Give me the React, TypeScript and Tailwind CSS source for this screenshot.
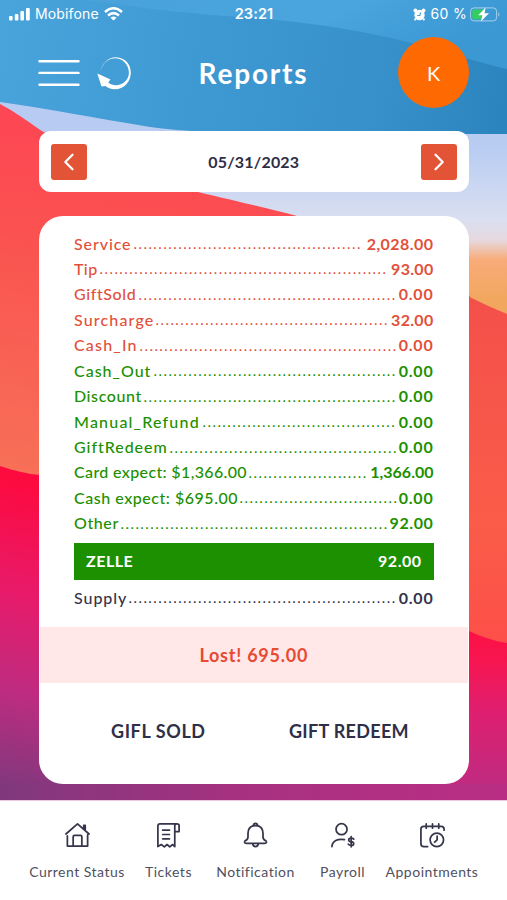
import type { ReactNode } from "react";
import { clsx } from "clsx";

interface ReportRow {
  label: string;
  value: string;
  dots: number;
  tone: string;
  labelClass: string;
  valueClass: string;
}

const RED = "text-[#e2503a]";
const GREEN = "text-[#1c9000]";
const INK = "text-[#33334a]";

const rows: ReportRow[] = [
  { label: "Service", value: "2,028.00", dots: 46, tone: RED, labelClass: "w-[59px] tracking-[0.9px]", valueClass: "tracking-[0.45px]" },
  { label: "Tip", value: "93.00", dots: 58, tone: RED, labelClass: "w-[25px] tracking-[0.4px]", valueClass: "tracking-[0.3px]" },
  { label: "GiftSold", value: "0.00", dots: 52, tone: RED, labelClass: "w-[64px] tracking-[0.6px]", valueClass: "tracking-[0.8px]" },
  { label: "Surcharge", value: "32.00", dots: 47, tone: RED, labelClass: "w-[81px] tracking-[1.15px]", valueClass: "tracking-[0.3px]" },
  { label: "Cash_In", value: "0.00", dots: 52, tone: RED, labelClass: "w-[65px] tracking-[1.2px]", valueClass: "tracking-[0.8px]" },
  { label: "Cash_Out", value: "0.00", dots: 49, tone: GREEN, labelClass: "w-[79px] tracking-[1px]", valueClass: "tracking-[0.8px]" },
  { label: "Discount", value: "0.00", dots: 51, tone: GREEN, labelClass: "w-[69px] tracking-[0.6px]", valueClass: "tracking-[0.8px]" },
  { label: "Manual_Refund", value: "0.00", dots: 39, tone: GREEN, labelClass: "w-[128px] tracking-[1.2px]", valueClass: "tracking-[0.8px]" },
  { label: "GiftRedeem", value: "0.00", dots: 46, tone: GREEN, labelClass: "w-[95px] tracking-[0.95px]", valueClass: "tracking-[0.8px]" },
  { label: "Card expect: $1,366.00", value: "1,366.00", dots: 24, tone: GREEN, labelClass: "w-[174px] tracking-[0.36px]", valueClass: "tracking-[0px]" },
  { label: "Cash expect: $695.00", value: "0.00", dots: 32, tone: GREEN, labelClass: "w-[165px] tracking-[0.53px]", valueClass: "tracking-[0.8px]" },
  { label: "Other", value: "92.00", dots: 54, tone: GREEN, labelClass: "w-[46px] tracking-[0.6px]", valueClass: "tracking-[0.6px]" },
];

const supply: ReportRow = {
  label: "Supply",
  value: "0.00",
  dots: 54,
  tone: INK,
  labelClass: "w-[54px] tracking-[0.95px]",
  valueClass: "tracking-[0.8px]",
};

function Wallpaper() {
  return (
    <svg
      className="absolute inset-0 h-[800px] w-full"
      viewBox="0 0 507 800"
      preserveAspectRatio="none"
      aria-hidden
    >
      <defs>
        <linearGradient id="sky" gradientUnits="userSpaceOnUse" x1="0" y1="100" x2="0" y2="300">
          <stop offset="0" stopColor="#b7cbf3" />
          <stop offset="0.25" stopColor="#b9cdf2" />
          <stop offset="0.6" stopColor="#dadff1" />
          <stop offset="0.7" stopColor="#e6d9df" />
          <stop offset="0.8" stopColor="#f8ab78" />
          <stop offset="1" stopColor="#f2a75f" />
        </linearGradient>
        <linearGradient id="blueTop" x1="0" y1="0" x2="1" y2="0.3">
          <stop offset="0" stopColor="#49a2da" />
          <stop offset="0.6" stopColor="#4aa4de" />
          <stop offset="1" stopColor="#3b98d2" />
        </linearGradient>
        <linearGradient id="blueLow" gradientUnits="userSpaceOnUse" x1="0" y1="30" x2="507" y2="110">
          <stop offset="0" stopColor="#4aa4dc" />
          <stop offset="0.45" stopColor="#3d97d0" />
          <stop offset="0.75" stopColor="#3790c9" />
          <stop offset="1" stopColor="#2c84be" />
        </linearGradient>
        <linearGradient id="coral" gradientUnits="userSpaceOnUse" x1="40" y1="110" x2="0" y2="470">
          <stop offset="0" stopColor="#fe4654" />
          <stop offset="0.35" stopColor="#fa5250" />
          <stop offset="1" stopColor="#f77057" />
        </linearGradient>
        <linearGradient id="coralRight" gradientUnits="userSpaceOnUse" x1="0" y1="300" x2="0" y2="645">
          <stop offset="0" stopColor="#f4504a" />
          <stop offset="0.65" stopColor="#fa5c49" />
          <stop offset="1" stopColor="#fd4f48" />
        </linearGradient>
        <linearGradient id="crimson" gradientUnits="userSpaceOnUse" x1="140" y1="430" x2="60" y2="800">
          <stop offset="0" stopColor="#ff083a" />
          <stop offset="0.2" stopColor="#fd0a3f" />
          <stop offset="0.5" stopColor="#e71b6b" />
          <stop offset="0.75" stopColor="#bd2c80" />
          <stop offset="1" stopColor="#80387d" />
        </linearGradient>
        <linearGradient id="crimsonRight" gradientUnits="userSpaceOnUse" x1="0" y1="625" x2="0" y2="800">
          <stop offset="0" stopColor="#fe1042" />
          <stop offset="0.2" stopColor="#f71550" />
          <stop offset="0.5" stopColor="#df1f70" />
          <stop offset="1" stopColor="#b92e84" />
        </linearGradient>
        <linearGradient id="floor" gradientUnits="userSpaceOnUse" x1="0" y1="0" x2="507" y2="0">
          <stop offset="0" stopColor="#80387d" />
          <stop offset="0.5" stopColor="#a83181" />
          <stop offset="1" stopColor="#b92e84" />
        </linearGradient>
      </defs>
      <rect width="507" height="340" fill="url(#sky)" />
      <path d="M0 0H507V134H420C300 134 220 136 150 127C95 118 45 108 0 102Z" fill="url(#blueLow)" />
      <path d="M85 0C120 5 175 13 254 18C330 24 375 34 412 43C445 51 475 62 507 69V0Z" fill="url(#blueTop)" />
      <path d="M0 104C22 116 31 124 42 131C90 160 140 175 198 192C240 202 270 209 297 216C390 242 430 280 470 296L470 660H0Z" fill="url(#coral)" />
      <path d="M440 280C455 290 480 303 507 314V660H440Z" fill="url(#coralRight)" />
      <path d="M0 466C15 471 28 474 40 475L250 560V800H0Z" fill="url(#crimson)" />
      <path d="M250 560L469 631C482 637 494 641 507 643V800H250Z" fill="url(#crimsonRight)" />
      <rect y="784" width="507" height="16" fill="url(#floor)" />
    </svg>
  );
}

function StatusBar() {
  return (
    <div className="grid h-7 grid-cols-3 items-center pl-[9px] pr-[6px] font-['Inter',sans-serif] text-[15px] leading-none text-white">
      <div className="flex items-center">
        <svg className="h-[14px] w-[21px]" viewBox="0 0 21 14" fill="currentColor" aria-hidden>
          <rect x="0" y="9" width="3.6" height="4.5" rx="1" />
          <rect x="5.8" y="7" width="3.6" height="6.5" rx="1" />
          <rect x="11.4" y="4" width="3.6" height="9.5" rx="1" />
          <rect x="17" y="1" width="3.8" height="12.5" rx="1" />
        </svg>
        <span className="ml-[5px] text-[14px] tracking-[0.15px]">Mobifone</span>
        <svg className="ml-[5px] h-[14px] w-[19px]" viewBox="0 0 19 14" fill="none" stroke="currentColor" strokeWidth="2.5" aria-hidden>
          <path d="M1 5Q9.5 -2.4 18 5" />
          <path d="M4 8.5Q9.5 3.8 15 8.5" />
          <path d="M9.5 13.5L6.5 10.7Q9.5 8.4 12.5 10.7Z" fill="currentColor" stroke="none" />
        </svg>
      </div>
      <div className="pr-[2px] text-center text-[14.5px] font-semibold tracking-[0.1px]">23:21</div>
      <div className="flex items-center justify-end">
        <svg className="h-[13px] w-[13px]" viewBox="0 0 13 13" aria-hidden>
          <circle cx="6.5" cy="7" r="5.2" fill="white" />
          <circle cx="2.4" cy="2.5" r="1.9" fill="white" />
          <circle cx="10.6" cy="2.5" r="1.9" fill="white" />
          <path d="M2.7 10.5L1.7 12.3M10.3 10.5L11.3 12.3" stroke="white" strokeWidth="1.8" />
          <path d="M7.6 4.4L6.8 7.5H4.2" fill="none" stroke="#4aa0d8" strokeWidth="1.2" />
        </svg>
        <span className="ml-[5px] text-[14px] tracking-[0.3px]">60 %</span>
        <svg className="ml-[3px] h-[15px] w-[31px]" viewBox="0 0 31 15" aria-hidden>
          <rect x="0.6" y="0.9" width="26" height="13" rx="3.4" fill="none" stroke="#a5d0ed" strokeWidth="1" />
          <path d="M28.4 5.2Q30.6 7.4 28.4 9.6Z" fill="#a5d0ed" />
          <path d="M4 2.5H13V12.3H4Q2.2 12.3 2.2 10.5V4.3Q2.2 2.5 4 2.5Z" fill="#35cd62" />
          <path d="M15.7 0.4L8.2 8.3H12.4L10.9 14.6L19 6.3H14.5Z" fill="white" />
        </svg>
      </div>
    </div>
  );
}

function Header() {
  return (
    <header className="flex h-[89px] items-center justify-between pl-[38px] pr-[38px]">
      <div className="flex w-[110px] items-center">
        <svg className="h-[30px] w-[42px]" viewBox="0 0 42 30" stroke="white" strokeWidth="2.4" strokeLinecap="round" aria-hidden>
          <path d="M1.5 3.3H40.5M1.5 14.9H40.5M1.5 26.7H40.5" />
        </svg>
        <svg className="ml-[17px] h-[36px] w-[36px]" viewBox="0 0 36 36" fill="none" aria-hidden>
          <path d="M3.7 16.2C5.4 4.8 17.5 -2.1 28 5.3C38.8 13.8 34 34 17.7 34.3C13.5 34.2 11 33 8.3 31L4.5 31.5L0.3 18.5L13.5 24.5L11.2 27.6C18.8 33.6 32.4 28.8 31.9 16.9C31 5.4 19.5 -0.3 10.5 5.5C6.6 8 4.6 11.8 3.7 16.2Z" fill="white" />
        </svg>
      </div>
      <h1 className="text-[28px] font-bold leading-none tracking-[1.8px] text-white">Reports</h1>
      <div className="flex w-[110px] justify-end">
        <div className="flex h-[71px] w-[71px] items-center justify-center rounded-full bg-[#ff6901] text-[20px] text-white">
          K
        </div>
      </div>
    </header>
  );
}

function DateButton({ path }: { path: string }) {
  return (
    <button className="flex h-9 w-9 items-center justify-center rounded-[3px] bg-[#e35336]">
      <svg className="h-[18px] w-[12px]" viewBox="0 0 12 18" fill="none" stroke="white" strokeWidth="2.3" strokeLinecap="round" strokeLinejoin="round" aria-hidden>
        <path d={path} />
      </svg>
    </button>
  );
}

function LeaderRow({ row }: { row: ReportRow }) {
  return (
    <div className={clsx("flex h-[25.45px] items-center text-[16px] leading-none", row.tone)}>
      <span className={clsx("shrink-0 whitespace-nowrap font-medium", row.labelClass)}>{row.label}</span>
      <span className="-mr-1 shrink-0 whitespace-nowrap pt-px font-['Liberation_Sans',sans-serif] text-[16px] tracking-[0.52px]">
        {".".repeat(row.dots)}
      </span>
      <span className={clsx("ml-auto font-bold", row.valueClass)}>{row.value}</span>
    </div>
  );
}

function NavItem({ label, className, children }: { label: string; className: string; children: ReactNode }) {
  return (
    <a className={clsx("flex flex-col items-center", className)}>
      <svg
        className="h-[27px] w-[27px]"
        viewBox="0 0 28 28"
        fill="none"
        stroke="#35354b"
        strokeWidth="1.8"
        strokeLinecap="round"
        strokeLinejoin="round"
        aria-hidden
      >
        {children}
      </svg>
      <span className="mt-[15px] whitespace-nowrap text-[14px] leading-[18px] tracking-[0.5px] text-[#505060]">{label}</span>
    </a>
  );
}

export default function App() {
  return (
    <div className="relative flex h-[900px] w-[507px] flex-col overflow-hidden bg-white font-['Lato',sans-serif]">
      <Wallpaper />
      <div className="relative flex h-[799.5px] flex-col">
        <StatusBar />
        <Header />
        <main className="ml-[38.5px] mr-[38px] mt-[14px]">
          <section className="flex h-[61px] items-center justify-between rounded-xl bg-white px-[12.5px]">
            <DateButton path="M9.5 1.8L2.3 9L9.5 16.2" />
            <span className="text-[16px] font-bold leading-none tracking-[0.2px] text-[#2d2d45]">05/31/2023</span>
            <DateButton path="M2.5 1.8L9.7 9L2.5 16.2" />
          </section>

          <section className="mt-6 flex h-[567.5px] flex-col overflow-hidden rounded-[24px] bg-white pt-[14.8px]">
            <div className="px-[35.5px]">
              {rows.map((row) => (
                <LeaderRow key={row.label} row={row} />
              ))}
              <div className="mb-[5.3px] mt-[6.8px] flex h-[37px] items-center justify-between bg-[#1c9000] px-3 text-[16px] font-bold leading-none text-white">
                <span className="tracking-[0.5px]">ZELLE</span>
                <span className="tracking-[0.5px]">92.00</span>
              </div>
              <LeaderRow row={supply} />
            </div>
            <div className="mx-[1px] mt-[16px] flex h-[56px] shrink-0 items-center justify-center bg-[#ffe8e7] text-[18px] font-bold leading-none tracking-[0.75px] text-[#e84a33]">
              Lost! 695.00
            </div>
            <div className="flex h-[96px] items-center pl-[72.5px] text-[18px] font-bold leading-none text-[#2f2f47]">
              <button className="w-[178px] text-left tracking-[0.6px]">GIFL SOLD</button>
              <button className="tracking-[0.3px]">GIFT REDEEM</button>
            </div>
          </section>
        </main>
      </div>

      <nav className="relative flex h-[100.5px] border-t border-[#ecc9e4] bg-white pt-[20px]">
        <NavItem label="Current Status" className="ml-[22px] w-[110px]">
          <path d="M2 13.5L14 3L26 13.5M20.5 8.5V4.5H22V9.8M3.5 15.5V26H24.5V14.5M9.5 26V16.3Q9.5 15 10.8 15H17.2Q18.5 15 18.5 16.3V26" />
        </NavItem>
        <NavItem label="Tickets" className="w-[73px]">
          <path d="M22 3H5.2Q3 3 3 5.2V26.5L6.5 24.4L9.7 26.8L12.5 24.4L15.3 26.8L18.3 24.4L20.5 26.5V5Q20.5 3 22.7 3Q25 3 25 5V11H20.5M8 9.5H15M8 14H15M8 18.5H15" />
        </NavItem>
        <NavItem label="Notification" className="w-[101px]">
          <path d="M11.8 4.8Q12 2.5 14 2.5Q16 2.5 16.2 4.8C20.3 6 21.8 9.2 21.8 13V16.5Q21.8 19.4 24.8 20.5Q26.3 22.8 23.5 23.2H4.5Q1.7 22.8 3.2 20.5Q6.2 19.4 6.2 16.5V13C6.2 9.2 7.7 6 11.8 4.8ZM12 5Q14 4.5 16 5M11 23.5Q11.4 26.5 14 26.5Q16.6 26.5 17 23.5" />
        </NavItem>
        <NavItem label="Payroll" className="w-[73px]">
          <circle cx="13" cy="8.5" r="5.7" />
          <path d="M3 26.5C3.5 20.5 9 18.2 16 19.3M25.7 18.8Q24.8 17.7 22.9 17.7Q20.4 17.7 20.4 19.6Q20.4 21.2 23 21.5Q25.6 21.8 25.6 23.5Q25.6 25.3 23 25.3Q21 25.3 20 24.1M23 16.3V26.8" />
        </NavItem>
        <NavItem label="Appointments" className="w-[106px]">
          <path d="M2 8.5Q2 5.5 4.8 5.5H23Q26 5.5 26 8.5V9.5M2 8.5V23.5Q2 26.5 5 26.5H9M7.5 3V7.5M14 3V7.5M20.5 3V7.5" />
          <circle cx="18.5" cy="19.5" r="7" />
          <path d="M18.8 15.8V19.5L16.2 22" />
        </NavItem>
      </nav>
    </div>
  );
}
